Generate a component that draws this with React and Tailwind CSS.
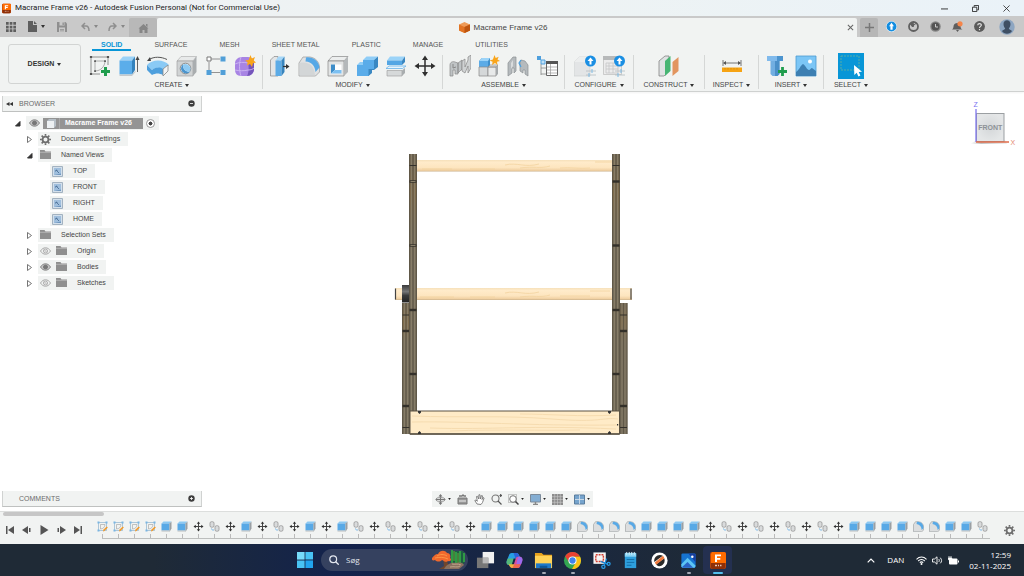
import React from "react";

const Svg = ({ s = "size-[22px]", v = "0 0 22 22", children, ...rest }) => (
  <svg className={`${s} shrink-0`} viewBox={v} fill="none" aria-hidden="true" {...rest}>
    {children}
  </svg>
);

const Caret = () => (
  <svg className="h-[3px] w-1 shrink-0" viewBox="0 0 4 3" aria-hidden="true">
    <path d="M0 0h4L2 3z" fill="#333" />
  </svg>
);

/* ---------- ribbon icons ---------- */

const SketchNew = () => (
  <Svg>
    <path d="M2 2h17v8M2 2v17h9" stroke="#777" strokeWidth=".8" />
    <path d="M6 16V6h10c0 5-4 10-10 10z" stroke="#999" strokeWidth=".8" />
    <path d="M.9.900h2.200v2.200H.9zM17.900.900h2.200v2.200h-2.200zM.9 17.900h2.200v2.200H.9zM5.200 5.200h1.700v1.700H5.200zM15.200 5.200h1.700v1.700h-1.700zM5.200 15.200h1.700v1.700H5.200z" fill="#555" />
    <path d="M16.500 12v9M12 16.500h9" stroke="#1f9d4d" strokeWidth="3" />
  </Svg>
);
const Extrude = () => (
  <Svg>
    <path d="M1.500 5.500 5 1.500h12l-3 4z" fill="#9ad2f7" />
    <path d="M1.500 5.500H14V19.500H1.500z" fill="#5badea" />
    <path d="m14 5.500 3-4V15l-3 4.500z" fill="#3583bd" />
    <path d="M1.500 19.500H14l3.500-4v1.500L14 21H1.500z" fill="#c5c9cc" />
    <path d="M19.500 17V4" stroke="#555" strokeWidth=".9" />
    <path d="m19.500 1 2 4h-4z" fill="#444" />
  </Svg>
);
const Revolve = () => (
  <Svg>
    <path d="M0 10C5 4 17 4 22 10l-5 5c-4-3-8-3-12 0z" fill="#8acaf5" />
    <path d="M0 10v5l5 5v-5zM5 15c4-3 8-3 11-1v6c-4-2-7-2-11 0z" fill="#4d9fdd" />
    <path d="m16 14 5-4v6l-5 5z" fill="#f2f3f3" stroke="#888" strokeWidth=".8" />
    <path d="M2 4.500c5-3 12-3 18 0" stroke="#555" />
    <path d="m0 6 3-4 1 4z" fill="#444" />
  </Svg>
);
const Hole = () => (
  <Svg>
    <path d="m1 6 4-4.500h15.500L17 6z" fill="#e8eaea" stroke="#aaa" strokeWidth=".6" />
    <path d="M1 6h16v15H1z" fill="#d0d3d4" stroke="#999" strokeWidth=".6" />
    <path d="m17 6 3.500-4.500V17L17 21z" fill="#a9adaf" />
    <circle cx="9.500" cy="13.500" r="5.300" fill="#f4f5f5" stroke="#777" strokeWidth=".8" />
    <path d="M7 9.500a5 5 0 1 0 7 7C10 17.500 6.500 14 7 9.500z" fill="#4a94cd" />
    <path d="M7 9.500c1-1 6-1 7.300 3 .2 1.500 0 3-.3 4C10 17.500 6.500 14 7 9.500z" fill="#8fcbf3" />
  </Svg>
);
const Pattern = () => (
  <Svg>
    <path d="M6 4h9M4 7v8M6 17.500h9" stroke="#888" strokeWidth=".9" />
    <path d="M2 2h4v4H2z" stroke="#777" fill="#fff" />
    <path d="M15.500 1.500h5v5h-5zM1.500 15h5v5h-5zM15.500 15h5v5h-5z" fill="#519fd8" />
  </Svg>
);
const FormIcon = () => (
  <Svg>
    <path d="M1 8c0-3 3-6 7-6h6c4 0 6 3 6 7v5c0 4-3 7-7 7H7c-4 0-6-3-6-6z" fill="#a884e4" />
    <path d="M14 7c2 0 5-3 6-4v11c0 4-3 7-7 7 2-3 2-10 1-14z" fill="#7555bb" />
    <path d="M1 9c4-2 9-2 13-1 3 0 5-2 6-3M1 15c4 1 9 1 13 0 3 0 5-1 6-2M7 2c-2 6-2 13 0 19" stroke="#cdb7f3" strokeWidth=".9" />
    <path d="m16.500 0 1.300 3.400L21 2.100l-1.300 3.300L22 7.500l-3 .7L18 12l-2-3-3 1.500.6-3.300L11 5.500l3.600-.6z" fill="#f9a51b" />
  </Svg>
);
const PressPull = () => (
  <Svg>
    <path d="M1.500 5 5 1.500h4V21H1.500z" fill="#e3e5e6" stroke="#888" strokeWidth=".7" />
    <path d="M6.500 5.500 9.500 1.500h6l-3 4z" fill="#a6d7f8" />
    <path d="M6.500 5.500h6V21h-6z" fill="#5cabe6" />
    <path d="m12.500 5.500 3-4V17l-3 4z" fill="#3784bd" />
    <path d="M14 11.500h4" stroke="#333" strokeWidth="1.200" />
    <path d="m17 9 3.500 2.500L17 14z" fill="#333" />
  </Svg>
);
const Fillet = () => (
  <Svg>
    <path d="M1 8 5 2h7c6 1 9 5 9.500 10v5l-4 4H1z" fill="#e0e2e3" stroke="#999" strokeWidth=".7" />
    <path d="M8 2.500c6-1 13 3 13.500 10L17.500 17C17 11 14 7 7.500 6.500z" fill="#56a8e6" />
    <path d="M1.500 8C9 6.500 16 9 17 20.500H1.500z" fill="#d3d6d7" />
  </Svg>
);
const Shell = () => (
  <Svg>
    <path d="m1 6 4-4.500h16L17 6z" fill="#eceeee" stroke="#888" strokeWidth=".7" />
    <path d="M1 6h16v15H1z" fill="#e2e4e4" stroke="#888" strokeWidth=".7" />
    <path d="m17 6 4-4.500V17l-4 4z" fill="#b4b8ba" />
    <path d="M4 9.500h10.500v9H4z" fill="#fff" />
    <path d="M4 9.500h4V15l-4 3.500z" fill="#3e8dc8" />
    <path d="M4 18.500 8 15h6.500v3.500z" fill="#7cc0f1" />
  </Svg>
);
const Combine = () => (
  <Svg>
    <path d="m7 5 3.500-3.500H22L18 5z" fill="#8fcdf7" />
    <path d="M7 5h11v9h-5v7H1V10h6z" fill="#5aace9" />
    <path d="m18 5 4-3.500V12l-4 3h-2v3l-3.500 3v-7H18z" fill="#3a88c2" />
    <path d="m1 10 3-3h3v3z" fill="#8fcdf7" />
  </Svg>
);
const Split = () => (
  <Svg>
    <path d="m2 5.500 3-4h15l-3 4z" fill="#9bd3f8" />
    <path d="M2 5.500h15V10H2z" fill="#54a6e4" />
    <path d="m17 5.500 3-4V7l-3 3z" fill="#3a86c0" />
    <path d="M1 13.500 4 11h17l-3.500 2.500z" fill="#e8f4fc" stroke="#69b3e8" strokeWidth=".8" />
    <path d="M2 15.500h15V21H2z" fill="#d6d9da" stroke="#999" strokeWidth=".6" />
    <path d="m17 15.500 3-2.500v5l-3 3z" fill="#a9adaf" />
  </Svg>
);
const Move = ({ s }) => (
  <Svg s={s}>
    <path d="M11 3v16M3 11h16" stroke="#2e2e2e" strokeWidth="1.500" />
    <path d="m11 .5 3 4.500H8zM11 21.500 14 17H8zM.5 11 5 8v6zM21.500 11 17 8v6z" fill="#2e2e2e" />
  </Svg>
);
const Joint = () => (
  <Svg>
    <path d="M1 21V10c0-3 3-4 5-3l3 1v11H6v-4H4v6zM9 8l4-3v9l-4 4z" fill="#bfc3c5" stroke="#888" strokeWidth=".7" />
    <path d="M13 16V6l3-2v8l3-7V2l3-2v13l-3 5V11l-3 7z" fill="#cfd2d3" stroke="#888" strokeWidth=".7" />
    <path d="M4 9v4l3-1" stroke="#888" />
  </Svg>
);
const NewComponent = () => (
  <Svg>
    <path d="m1 6 3-3h8v9H1z" fill="#3f8fcb" />
    <path d="M1 6h9v6H1z" fill="#5cabe6" />
    <path d="m1 6 3-3h8l-2 3z" fill="#9bd3f8" />
    <path d="M1 12h9v9H1z" fill="#d5d8d9" stroke="#888" strokeWidth=".7" />
    <path d="m10 12 2-2h8l-2 2zM10 12h8v9h-8z" fill="#e8eaea" stroke="#888" strokeWidth=".7" />
    <path d="m18 12 2-2v9l-2 2z" fill="#a5a9ab" />
    <path d="m16.500 0 1.200 3 3-1.300L19.500 4.500 22 6l-3 .8.5 3.200-2.500-2-3 2 .6-3.200L11.500 5.500l3.400-.9z" fill="#f9a51b" />
  </Svg>
);
const AsBuilt = () => (
  <Svg>
    <path d="M1 21V8l5-6h3v14l-2 2v-5H5v5zM13 16V8l1-3 4 1 3 4v11l-3-2v-4h-2v3z" fill="#b5babd" stroke="#8b8f92" strokeWidth=".7" />
    <path d="m4 8 2-3v6l-2 3z" fill="#d9dcdd" />
    <path d="m14 5-2 3 2 4" stroke="#49a0e0" strokeWidth="1.200" />
  </Svg>
);
const Bom = () => (
  <Svg>
    <path d="M1 1h4v4H1z" fill="#4e9fdd" />
    <path d="M5 5h4v4H5z" fill="#bfe0f6" stroke="#4e9fdd" />
    <path d="M5 9v11M5 13h5M5 19h5" stroke="#888" strokeWidth=".8" />
    <path d="M10.500 6.500h11v14h-11z" fill="#fff" stroke="#666" />
    <path d="M10 6h12v3H10z" fill="#555" />
    <path d="M11 12h10M11 15h10M11 18h10M14.500 9v11" stroke="#999" strokeWidth=".7" />
  </Svg>
);
const Upgrade = () => (
  <>
    <circle cx="16.500" cy="6" r="5.500" fill="#1b8fe3" />
    <path d="M16.500 2.500 19.500 6h-2v3.500h-2V6h-2z" fill="#fff" />
    <path d="M12 16h10M12 20h10" stroke="#b5bcc2" strokeWidth=".8" />
    <path d="M18 14v4M15 18v4" stroke="#7dbbe5" />
  </>
);
const Configure = () => (
  <Svg>
    <path d="m0 7 5-5h14l-3 5v14H0z" fill="#e3e5e6" stroke="#cbcece" strokeWidth=".6" />
    <path d="m0 7 5-5h14l-3 5z" fill="#eceeee" />
    <Upgrade />
  </Svg>
);
const ConfigTable = () => (
  <Svg>
    <path d="M.5 1.500h18v18H.5z" fill="#ececec" stroke="#bbb" strokeWidth=".7" />
    <path d="M0 1h19v4H0z" fill="#b7b9ba" />
    <path d="M3 8h12v10H3zM3 11h12M3 14h12M6 8v10M10 8v10" stroke="#c5c7c8" strokeWidth=".8" />
    <Upgrade />
  </Svg>
);
const Plane = () => (
  <Svg>
    <path d="m1 6 6-5h4v15l-5 5H1z" fill="#dfe2e3" stroke="#777" strokeWidth=".7" />
    <path d="m7 6 5.500-5v15L7 21z" fill="#47b573" />
    <path d="m14.500 7 6-5v14l-6 5z" fill="#e2955f" />
  </Svg>
);
const Measure = () => (
  <Svg>
    <path d="M2 5v6M20 5v6M3 8h16" stroke="#666" strokeWidth=".9" />
    <path d="m2 8 3-2v4zM20 8l-3-2v4z" fill="#555" />
    <path d="M1 12.500h20v4.500H1z" fill="#f6a313" />
    <path d="M4 13v1.500M7 13v1.500M10 13v1.500M13 13v1.500M16 13v1.500" stroke="#c98208" strokeWidth=".6" />
  </Svg>
);
const InsertBolt = () => (
  <Svg>
    <path d="M1 1h16v5H1z" fill="#4c94cf" />
    <path d="M1 1h10v5H1z" fill="#80baec" />
    <path d="M4.500 6h9v13l-2 2h-5l-2-2z" fill="#71aee1" />
    <path d="M9 6h4.500v13l-2 2H9z" fill="#4a8fc8" />
    <path d="M16.500 12v9M12 16.500h9" stroke="#1f9d4d" strokeWidth="2.800" />
  </Svg>
);
const InsertImage = () => (
  <Svg>
    <path d="M1 1h20v20H1z" fill="#7cc6f6" stroke="#4d9bd0" strokeWidth=".8" />
    <path d="M1 17c4-3 4-6 7-8 3 2 4 6 6 6 1 0 2-2 3-2l4 3v5H1z" fill="#3d7fb2" />
    <circle cx="15" cy="6.500" r="2" fill="#fff" />
  </Svg>
);
const SelectIcon = () => (
  <span className="-my-0.5 flex size-[26px] items-center justify-center bg-[#0896d7]">
    <Svg>
      <path d="M1 1h18v14H1z" stroke="#6db39a" strokeWidth=".8" strokeDasharray="2 1" />
      <path d="m14 10 .3 10 2.400-2.200 1.700 3.700 2-1-1.700-3.500 3.300-.3z" fill="#fff" />
    </Svg>
  </span>
);

const ribbonGroups = [
  { name: "CREATE", w: "w-[181px]", icons: [SketchNew, Extrude, Revolve, Hole, Pattern, FormIcon] },
  { name: "MODIFY", w: "w-[180px]", icons: [PressPull, Fillet, Shell, Combine, Split, Move] },
  { name: "ASSEMBLE", w: "w-[122px]", icons: [Joint, NewComponent, AsBuilt, Bom] },
  { name: "CONFIGURE", w: "w-[69px]", icons: [Configure, ConfigTable] },
  { name: "CONSTRUCT", w: "w-[71px]", icons: [Plane] },
  { name: "INSPECT", w: "w-[54px]", icons: [Measure] },
  { name: "INSERT", w: "w-[65px]", icons: [InsertBolt, InsertImage] },
  { name: "SELECT", w: "w-[54px]", icons: [SelectIcon] },
];
const ribbonTabs = ["SOLID", "SURFACE", "MESH", "SHEET METAL", "PLASTIC", "MANAGE", "UTILITIES"];

const FusionLogo = ({ s }) => (
  <Svg s={s} v="0 0 16 17">
    <rect x="0" y="0" width="16" height="17" rx="2" fill="#b8440a" />
    <path d="M2 0h12a2 2 0 0 1 2 2v9H1V2z" fill="#ff6b00" />
    <path d="M5 2.500h6v1.800H7V6h3.300v1.700H7V10H5z" fill="#fff" />
    <path d="M1 11h14v4a2 2 0 0 1-2 2H3a2 2 0 0 1-2-2z" fill="#8f2f07" />
    <path d="M5 13.500h2M8 13.500h1M10 13.500h1.500" stroke="#e6c8ba" strokeWidth="1.300" />
  </Svg>
);

function TitleBar() {
  return (
    <header className="flex h-4 items-center bg-gradient-to-r from-[#eef1f4] via-[#eef3f3] to-[#eaf2f8] pr-3.5 pl-0.5">
      <FusionLogo s="h-[11px] w-[9px]" />
      <h1 className="ml-1 font-[Roboto,sans-serif] text-[8px] leading-4 whitespace-nowrap text-[#222]">
        Macrame Frame v26 - Autodesk Fusion Personal (Not for Commercial Use)
      </h1>
      <div className="ml-auto flex gap-6">
        <button aria-label="Minimize"><Svg s="size-[7px]" v="0 0 8 8"><path d="M0 4.500h8" stroke="#222" /></Svg></button>
        <button aria-label="Restore"><Svg s="size-[7px]" v="0 0 8 8"><path d="M.5 2.500h5v5h-5zM2.500 2V.5h5v5H6" stroke="#222" /></Svg></button>
        <button aria-label="Close"><Svg s="size-[7px]" v="0 0 8 8"><path d="m.5.5 7 7m0-7-7 7" stroke="#222" strokeWidth=".9" /></Svg></button>
      </div>
    </header>
  );
}

function TabBar() {
  return (
    <div className="flex h-[21px] items-end bg-[#c9c9c9]">
      <div className="flex h-[21px] w-[129px] shrink-0 items-center pl-1.5">
        <button aria-label="Data panel">
          <Svg s="size-2.5" v="0 0 10 10"><path d="M0 0h2.700v2.700H0zM3.700 0h2.700v2.700H3.700zM7.300 0H10v2.700H7.300zM0 3.700h2.700v2.700H0zM3.700 3.700h2.700v2.700H3.700zM7.300 3.700H10v2.700H7.300zM0 7.300h2.700V10H0zM3.700 7.300h2.700V10H3.700zM7.300 7.300H10V10H7.300z" fill="#5e5e5e" /></Svg>
        </button>
        <button aria-label="File" className="ml-3 flex items-center gap-1">
          <Svg s="h-[11px] w-[9px]" v="0 0 9 11"><path d="M0 0h5v4h4v7H0zM6 0l3 3H6z" fill="#5e5e5e" /></Svg>
          <Caret />
        </button>
        <button aria-label="Save" className="ml-3">
          <Svg s="size-2.5" v="0 0 10 10"><path d="M0 0h8.500L10 1.500V10H0z" fill="#8f8f8f" /><path d="M2.500 0h5v3.500h-5zM2 5.500h6V10H2z" fill="#c9c9c9" /><path d="M5.500.5h1.300V3H5.500zM3 7h4v.8H3zM3 8.500h4v.8H3z" fill="#8f8f8f" /></Svg>
        </button>
        <button aria-label="Undo" className="ml-3.5 flex items-center gap-1">
          <Svg s="size-[9px]" v="0 0 9 9"><path d="M4 1 1 4l3 3M1.500 4H5c2 0 3 1.500 3 5" stroke="#8f8f8f" strokeWidth="1.500" /></Svg>
          <svg className="h-[3px] w-1" viewBox="0 0 4 3" aria-hidden="true"><path d="M0 0h4L2 3z" fill="#888" /></svg>
        </button>
        <button aria-label="Redo" className="ml-2.5 flex items-center gap-1">
          <Svg s="size-[9px]" v="0 0 9 9"><path d="m5 1 3 3-3 3M7.500 4H4C2 4 1 5.500 1 9" stroke="#8f8f8f" strokeWidth="1.500" /></Svg>
          <svg className="h-[3px] w-1" viewBox="0 0 4 3" aria-hidden="true"><path d="M0 0h4L2 3z" fill="#888" /></svg>
        </button>
      </div>
      <button aria-label="Home" className="flex h-[19px] w-7 shrink-0 items-center justify-center rounded-t-xs bg-[#b8b8b8] pt-0.5">
        <Svg s="size-[11px]" v="0 0 11 11"><path d="m5.500 1 5 4.500h-1V10h-3V7h-2v3h-3V5.500h-1zM8 1h1.500v3L8 2.700z" fill="#868686" /></Svg>
      </button>
      <div className="flex h-[19px] min-w-0 flex-1 items-center rounded-t-xs bg-[#f1f3f2] pr-[3px] pl-0.5">
        <div className="flex flex-1 items-center justify-center gap-1 text-[8px] text-[#444]">
          <Svg s="size-[11px]" v="0 0 11 11"><path d="M5.500 0 11 2.500v6L5.500 11 0 8.500v-6z" fill="#ee9b58" /><path d="m0 2.500 5.500 2.500L11 2.500v6L5.500 11 0 8.500z" fill="#e27424" /><path d="M5.500 5 11 2.500v6L5.500 11z" fill="#bd5510" /></Svg>
          <span className="pt-px">Macrame Frame v26</span>
        </div>
        <button aria-label="Close document"><Svg s="size-[7px]" v="0 0 8 8"><path d="m1 1 6 6m0-6L1 7" stroke="#666" strokeWidth="1.200" /></Svg></button>
      </div>
      <button aria-label="New document" className="ml-[3px] flex h-[19px] w-[18px] shrink-0 items-center justify-center rounded-t-xs bg-[#b6b6b6]">
        <Svg s="size-[9px]" v="0 0 9 9"><path d="M4.500 0v9M0 4.500h9" stroke="#777" strokeWidth="1.500" /></Svg>
      </button>
      <div className="flex h-[21px] shrink-0 items-center gap-[11px] pr-[9px] pl-2">
        <button aria-label="Updates"><Svg s="size-[11px]" v="0 0 10 10"><circle cx="5" cy="5" r="4.900" fill="#fff" /><circle cx="5" cy="5" r="4.500" fill="#138de0" /><path d="m5 1.500 2.200 3.200H6V8H4V4.700H2.800z" fill="#fff" /></Svg></button>
        <button aria-label="Extensions"><Svg s="size-[11px]" v="0 0 11 11"><circle cx="5.500" cy="5.500" r="4.500" stroke="#606060" strokeWidth="1.800" /><path d="M2 2.500h3.500v3H4zM6 4l2.500-2" fill="#606060" stroke="#606060" /></Svg></button>
        <button aria-label="Job status"><Svg s="size-[11px]" v="0 0 11 11"><circle cx="5.500" cy="5.500" r="5.300" fill="#8a8a8a" /><circle cx="5.500" cy="5.500" r="4" fill="#545454" /><path d="M5.500 3v3h2.500" stroke="#ccc" /></Svg></button>
        <button aria-label="Notifications"><Svg s="size-[11px]" v="0 0 11 11"><path d="M0 8.500c2-1 1-4 2.500-5.500C5 1 9 2 8.500 5c0 1.500.5 3 2 3.500zM4 9h3l-1.500 2z" fill="#5e5e5e" /><circle cx="8" cy="2.800" r="2.600" fill="#f5854a" /></Svg></button>
        <button aria-label="Help"><Svg s="size-[11px]" v="0 0 11 11"><circle cx="5.500" cy="5.500" r="5.400" fill="#5a5a5a" /><path d="M3.700 4.300C3.800 2 7.400 2 7.300 4.200 7.200 5.500 5.500 5.300 5.500 7M5.500 8v1.200" stroke="#e2e2e2" strokeWidth="1.200" /></Svg></button>
        <button aria-label="Account" className="ml-[3px]"><Svg s="size-4" v="0 0 16 16"><circle cx="8" cy="8" r="7.700" fill="#8da6c2" /><path d="M4.500 5c0-5 7-5 7 0 0 2-1 3.500-1.700 4.500.5 1.300 2 1.200 3.200 2.500-2 3.500-8 3.500-10 0 1.200-1.300 2.700-1.200 3.200-2.500C5.500 8.500 4.500 7 4.500 5z" fill="#3f4f64" /></Svg></button>
      </div>
    </div>
  );
}

function Ribbon() {
  return (
    <div className="flex h-[55px] items-start border-b border-[#cfd1d0] bg-[#f1f3f2] shadow-xs">
      <button aria-haspopup="menu" className="mt-[7px] ml-2 flex h-10 w-[73px] shrink-0 items-center justify-center gap-[3px] rounded-[3px] border border-[#d2d4d3] text-[7px] font-bold text-[#333]">
        DESIGN <Caret />
      </button>
      <div className="min-w-0 pl-px">
        <nav className="flex h-3.5 gap-3.5 pl-2.5" aria-label="Workspace tabs">
          {ribbonTabs.map((t, i) => (
            <button
              key={t}
              className={
                i === 0
                  ? "border-b-2 border-[#0896d7] px-[9px] pt-1 text-[7px] leading-2 font-bold whitespace-nowrap text-[#0896d7]"
                  : "border-b-2 border-transparent px-[9px] pt-1 text-[7px] leading-2 whitespace-nowrap text-[#555]"
              }
            >
              {t}
            </button>
          ))}
        </nav>
        <div className="flex pt-1">
          {ribbonGroups.map((g, i) => (
            <section key={g.name} className={`${g.w} ${i < ribbonGroups.length - 1 ? "border-r border-[#d5d7d6]" : ""} flex h-[34px] shrink-0 flex-col items-center`}>
              <div className="flex h-[22px] items-center justify-center gap-[7px]">
                {g.icons.map((Icon, k) => (
                  <button key={k} aria-label={`${g.name} ${k + 1}`}><Icon /></button>
                ))}
              </div>
              <button className="mt-1 flex items-center gap-[3px] text-[7px] leading-2 text-[#444]">
                {g.name} <Caret />
              </button>
            </section>
          ))}
        </div>
      </div>
    </div>
  );
}

/* ---------- browser tree ---------- */

const Folder = () => (
  <Svg s="h-2.5 w-[11px]" v="0 0 11 10"><path d="M0 0h4.500l1 1.500H11V9H0z" fill="#8f8f8f" /><path d="M0 2.300h11" stroke="#c4c4c4" strokeWidth=".7" /></Svg>
);
const Eye = ({ off }) => (
  <Svg s="h-2 w-[11px]" v="0 0 11 8">
    <path d="M.5 4C3-.3 8-.3 10.500 4 8 8.300 3 8.300.5 4z" stroke={off ? "#aaa" : "#888"} strokeWidth="1" fill={off ? "none" : "#c5c5c5"} />
    <circle cx="5.500" cy="4" r="2" fill={off ? "#eee" : "#777"} stroke={off ? "#aaa" : "#777"} />
    {off && <path d="m3 1 5 6" stroke="#bbb" />}
  </Svg>
);
const GearIcon = ({ s = "size-[11px]" }) => (
  <Svg s={s} v="0 0 12 12">
    <circle cx="6" cy="6" r="3.200" stroke="#6e6e6e" strokeWidth="2" />
    <path d="M6 0v2M6 10v2M0 6h2M10 6h2M1.800 1.800l1.400 1.400M8.800 8.800l1.400 1.400M10.200 1.800 8.800 3.200M3.200 8.800l-1.400 1.400" stroke="#6e6e6e" strokeWidth="1.800" />
  </Svg>
);
const ViewIcon = () => (
  <Svg s="size-[11px]" v="0 0 11 11"><path d="M.5.5h10v10H.5z" fill="#d3e0ec" stroke="#a3b2c0" /><path d="M2 2h7v7H2z" fill="#a0bfdd" /><path d="m4 4 3 3M3.500 5.500 4 4l1.500.500" stroke="#4d7298" strokeWidth=".9" /><path d="M2 9h7V7.500z" fill="#6f97bf" /></Svg>
);
const Twist = ({ open }) => (
  <Svg s="size-[7px]" v="0 0 7 7">
    {open ? <path d="M6 1.500V6H1.500z" fill="#333" stroke="#333" /> : <path d="M1.500.5 5.500 3.500l-4 3z" stroke="#666" fill="#fff" strokeWidth=".9" />}
  </Svg>
);

const nodes = [
  { label: "Document Settings", icons: [GearIcon], arrow: true },
  { label: "Named Views", icons: [Folder], arrow: true, open: true },
  { label: "TOP", view: true },
  { label: "FRONT", view: true },
  { label: "RIGHT", view: true },
  { label: "HOME", view: true },
  { label: "Selection Sets", icons: [Folder], arrow: true },
  { label: "Origin", eye: "off", icons: [Folder], arrow: true },
  { label: "Bodies", eye: "on", icons: [Folder], arrow: true },
  { label: "Sketches", eye: "off", icons: [Folder], arrow: true },
];

function PanelBar({ title, open }) {
  return (
    <div className="flex h-4 w-[200px] items-center border border-t-0 border-[#d0d2d1] border-b-[#bfc1c0] bg-[#f1f3f2] px-[3px] text-[7px] text-[#6b6b6b]">
      <span className="flex w-[13px]">
        {open && <Svg s="h-1 w-[7px]" v="0 0 7 4"><path d="M3.500 0v4L0 2zM7 0v4L3.500 2z" fill="#333" /></Svg>}
      </span>
      <h2 className="pt-0.5">{title}</h2>
      <button aria-label={`Toggle ${title.toLowerCase()}`} className="mr-[3px] ml-auto">
        <Svg s="size-[7px]" v="0 0 7 7"><circle cx="3.500" cy="3.500" r="3.200" fill="#3d3d3d" /><path d={open ? "M2 3.500h3" : "M2 3.500h3M3.500 2v3"} stroke="#fff" strokeWidth=".8" /></Svg>
      </button>
    </div>
  );
}

function Browser() {
  return (
    <aside className="pt-1 pl-0.5 text-[7px] text-[#444]">
      <PanelBar title="BROWSER" open />
      <ul className="mt-[3px]">
        <li className="flex h-4 items-center pl-3">
          <Twist open />
          <div className="ml-[5px] flex h-3.5 items-center bg-[#f1f3f2] pr-1 pl-[3px]">
            <Eye />
            <span className="ml-[3px] flex h-[11px] w-[100px] items-center bg-[#949494] font-bold text-white">
              <span className="flex h-[11px] w-[17px] items-center justify-center border-r border-[#aaa]">
                <Svg s="size-[9px]" v="0 0 9 9"><path d="M0 2 2 0h7v7L7 9H0z" fill="#b7c0c7" /><path d="M0 2h7v7H0z" fill="#edf1f3" /></Svg>
              </span>
              <span className="ml-[5px] whitespace-nowrap">Macrame Frame v26</span>
            </span>
            <input type="radio" name="active" defaultChecked aria-label="Activate Macrame Frame v26" className="ml-[3px] size-[9px] appearance-none rounded-full border border-[#999] bg-white bg-radial from-[#444] from-35% to-white to-45%" />
          </div>
        </li>
        {nodes.map((n) => (
          <li key={n.label} className={`flex h-4 items-center ${n.view ? "pl-12" : "pl-6"}`}>
            {n.arrow && <span className="mr-[5px] flex"><Twist open={n.open} /></span>}
            <div className="flex h-3.5 items-center bg-[#f1f3f2] pr-2 pl-0.5">
              {n.eye && <span className="mr-[5px] flex"><Eye off={n.eye === "off"} /></span>}
              {n.view ? <ViewIcon /> : n.icons.map((I, k) => <I key={k} />)}
              <span className="ml-2.5 whitespace-nowrap">{n.label}</span>
            </div>
          </li>
        ))}
      </ul>
    </aside>
  );
}

/* ---------- 3D model ---------- */

const Post = ({ x, y, h, thick, thin }) => (
  <g>
    <rect x={x} y={y} width="8" height={h} fill="url(#post)" />
    <path d={`M${x + 2.500} ${y}v${h}M${x + 5.500} ${y}v${h}`} stroke="#8c826c" strokeWidth=".8" />
    <path d={`M${x + 0.500} ${y}v${h}M${x + 4} ${y}v${h}M${x + 7.500} ${y}v${h}`} stroke="#5b5344" strokeWidth=".8" />
    {thick.map((t) => <rect key={t} x={x + 0.500} y={t - 1.200} width="7" height="2.400" fill="#33302a" />)}
    {thin.map((t) => <rect key={t} x={x + 0.500} y={t - 0.500} width="7" height="1" fill="#33302a" />)}
  </g>
);

function Model() {
  return (
    <svg className="mx-auto mt-[58px] h-[290px] w-[240px]" viewBox="392 150 240 290" role="img" aria-label="Front view of the macrame frame">
      <defs>
        <linearGradient id="post" x1="0" x2="0" y1="0" y2="1">
          <stop offset="0" stopColor="#706653" /><stop offset=".15" stopColor="#806c4c" /><stop offset=".3" stopColor="#756c5a" /><stop offset="1" stopColor="#736b59" />
        </linearGradient>
        <linearGradient id="rod" x1="0" x2="0" y1="0" y2="1">
          <stop offset="0" stopColor="#f6e0ba" /><stop offset=".2" stopColor="#ffebca" /><stop offset=".65" stopColor="#fde5bf" /><stop offset=".9" stopColor="#f0d0a2" /><stop offset="1" stopColor="#c9b08a" />
        </linearGradient>
        <linearGradient id="knob" x1="0" x2="0" y1="0" y2="1">
          <stop offset="0" stopColor="#3b3b3b" /><stop offset=".38" stopColor="#777" /><stop offset=".6" stopColor="#3b3b3b" /><stop offset="1" stopColor="#222" />
        </linearGradient>
      </defs>
      <rect x="417" y="160" width="196" height="11.500" fill="url(#rod)" />
      <path d="M505 165c12-3 20 3 34-1M520 168c14-2 20 1 30-2M595 162h17M560 168c10-1 20 1 30 0M422 169h30M470 169h25" stroke="#f3d3a0" strokeWidth=".8" fill="none" />
      <rect x="395" y="288" width="237" height="12" fill="url(#rod)" />
      <path d="M505 293c12-3 20 3 34-1M520 297c14-2 20 1 30-2M590 291h20M560 296h30M420 297h34M470 297h25" stroke="#f3d3a0" strokeWidth=".8" fill="none" />
      <path d="M395.500 288.500v11M631 288.500v11" stroke="#444" strokeWidth="1.200" />
      <Post x={402} y={303} h={131} thick={[331, 406]} thin={[315, 427.500]} />
      <Post x={619.500} y={303} h={131} thick={[331, 406]} thin={[315, 427.500]} />
      <rect x="402" y="285" width="8" height="17.500" fill="url(#knob)" />
      <Post x={409} y={154} h={258} thick={[181.500, 245.500, 310, 374]} thin={[165.500]} />
      <Post x={612} y={154} h={258} thick={[181.500, 245.500, 310, 374]} thin={[165.500]} />
      <path d="M410.500 181.500h5M410.500 245.500h5" stroke="#8a806a" strokeWidth="1" />
      <rect x="410" y="411" width="209.500" height="23" fill="#ffebc7" stroke="#5b5344" />
      <path d="M412 416c50 2 90-1 140 3s50-2 66 0M412 422c60-1 110 4 205 3M430 428c60 2 100-3 186 1M450 431c50-2 90 0 130-1M520 414c30 0 60 3 96 1" stroke="#f6dcb0" fill="none" />
      <path d="M410 434h209.500" stroke="#5b5344" strokeWidth="1.300" />
      <path d="M418 411h3v1.500l-1.500 1.500-1.500-1.500zM608 411h3v1.500l-1.500 1.500-1.500-1.500zM418 434h3v-1.500l-1.500-1.500-1.500 1.500zM608 434h3v-1.500l-1.500-1.500-1.500 1.500zM617 424h1.200v1.500H617z" fill="#333" />
    </svg>
  );
}

const ViewCube = () => (
  <svg className="mt-2 mr-1 ml-auto h-[52px] w-[52px]" viewBox="968 100 52 52" role="img" aria-label="View cube, front">
    <defs>
      <radialGradient id="cube"><stop offset="0" stopColor="#d4d7d9" /><stop offset="1" stopColor="#e4e6e7" /></radialGradient>
      <linearGradient id="shade"><stop offset="0" stopColor="#bbb" stopOpacity="0" /><stop offset=".3" stopColor="#999" /><stop offset="1" stopColor="#bbb" stopOpacity=".4" /></linearGradient>
    </defs>
    <path d="m970 144 7-4h28l2 4z" fill="url(#shade)" opacity=".6" />
    <rect x="976.500" y="113.500" width="27.500" height="28" fill="url(#cube)" stroke="#9b9fa2" />
    <path d="M976 109v33" stroke="#8078ef" strokeWidth="1.300" />
    <path d="M976 142h33" stroke="#df6b4a" strokeWidth="1.500" />
    <text x="973.500" y="107" fontSize="7" fill="#7a72f0" fontFamily="Liberation Sans">Z</text>
    <text x="1010.500" y="144.500" fontSize="7" fill="#e58a6e" fontFamily="Liberation Sans">X</text>
    <text x="990.300" y="130" fontSize="7" fontWeight="bold" textAnchor="middle" fill="#8d9297" fontFamily="Liberation Sans Narrow, Liberation Sans">FRONT</text>
  </svg>
);

/* ---------- navigation bar ---------- */

const navTools = [
  { n: "Orbit", c: true, d: <><path d="M5.500 1v9M1 5.500h9" stroke="#777" strokeWidth="1.200" /><ellipse cx="5.500" cy="5.500" rx="4.800" ry="2" stroke="#999" /><path d="m5.500 0 2 2.500h-4zM5.500 11l2-2.500h-4z" fill="#777" /></> },
  { n: "Look at", d: <><path d="M1 4h9v6H1z" fill="#999" stroke="#777" /><path d="M2 2h3l1-1 1 1h2" stroke="#777" strokeWidth="1.300" /><path d="M2 7h7" stroke="#eee" /></> },
  { n: "Pan", d: <path d="M3 10 .8 6.500 2 6l1.300 1.300L2.500 2.500l1-.2L4.700 5l.2-4.200H6L6.300 5 7.500 1.500l1 .3L8 5.500l1.200-2 .9.500L8.500 8.500 7 10.500z" fill="#fff" stroke="#777" strokeWidth=".9" /> },
  { n: "Zoom", d: <><circle cx="4.500" cy="4.500" r="3.500" stroke="#777" strokeWidth="1.100" /><path d="m7 7 3.500 3.500M8.500 1.500h2.500M9.700 0v3" stroke="#555" strokeWidth="1.200" /></> },
  { n: "Fit", c: true, d: <><path d="M.5.5h8v8h-8z" stroke="#999" strokeDasharray="1 1" /><circle cx="5" cy="5" r="3.300" stroke="#777" fill="#fff" /><path d="m7.500 7.500 3 3" stroke="#444" strokeWidth="1.500" /></> },
  { n: "Display settings", c: true, d: <><path d="M.5.500h10v7.500H.5z" fill="#84aed3" stroke="#7c8b9a" /><path d="M3 10.500h5M5.500 8v2" stroke="#888" strokeWidth="1.500" /></> },
  { n: "Grid and snaps", c: true, d: <><path d="M0 0h11v11H0z" fill="#8d8d8d" /><path d="M2.700 0v11M5.500 0v11M8.300 0v11M0 2.700h11M0 5.500h11M0 8.300h11" stroke="#c9c9c9" strokeWidth=".6" /></> },
  { n: "Viewports", c: true, d: <><path d="M.5 1h10v9H.5z" fill="#76a4cd" stroke="#5a7d9d" /><path d="M5.500 1v9M1 5.500h9" stroke="#dce6ee" strokeWidth=".8" /></> },
];

const NavBar = () => (
  <nav aria-label="Navigation" className="flex h-4 items-center gap-1.5 bg-[#f1f3f2] px-[3px]">
    {navTools.map((t) => (
      <button key={t.n} aria-label={t.n} className="flex items-center gap-0.5">
        <Svg s="size-[11px]" v="0 0 11 11">{t.d}</Svg>
        {t.c && <svg className="h-0.5 w-[3px]" viewBox="0 0 4 3" aria-hidden="true"><path d="M0 0h4L2 3z" fill="#222" /></svg>}
      </button>
    ))}
  </nav>
);

/* ---------- timeline ---------- */

const glyphs = {
  s: <><path d="M1.500 1.500h8v8h-8z" stroke="#9bbad2" strokeWidth=".8" /><path d="M3.500 8V3.500H8C8 6 6 8 3.500 8z" stroke="#aaa" strokeWidth=".7" /><path d="M.5.5h2v2h-2zM8.500.5h2v2h-2zM.5 8.500h2v2h-2z" fill="#7ab5e2" /><path d="m6 10.500.5-2 3.300-3 1 1-3.300 3.500z" fill="#f29a2b" /></>,
  b: <><path d="m.5 2.500 2-2h8l-2 2z" fill="#8bc9f3" /><path d="M.5 2.500h8v7h-8z" fill="#58a9e6" /><path d="m8.500 2.500 2-2v7l-2 3.500z" fill="#9a9fa3" /><path d="M.5 9.500h8v1h-8z" fill="#b9bdbf" /></>,
  m: <><path d="M5.500 1v9M1 5.500h9" stroke="#444" strokeWidth="1" /><path d="m5.500.5 1.700 2.300H3.800zM5.500 10.500l1.700-2.300H3.800zM.5 5.500l2.300-1.700v3.400zM10.500 5.500 8.200 3.800v3.400z" fill="#333" /></>,
  l: <><rect x="1" y=".7" width="4" height="5.500" rx="1.500" fill="#d9dbdc" stroke="#959595" strokeWidth=".8" /><rect x="6" y="4.700" width="4" height="5.500" rx="1.500" fill="#d9dbdc" stroke="#959595" strokeWidth=".8" /><path d="M2.500 7.500c0 1.500 1 1.500 2.500 1.500" stroke="#6fb1e4" strokeWidth=".9" /></>,
  f: <><path d="M.5 3.500 2.500.7H5c3.500 0 5.500 2.500 5.700 5.300v3l-2 1.700H.5z" fill="#dcdedf" stroke="#a2a6a8" strokeWidth=".7" /><path d="M4 .8c4 0 6.500 2 6.500 6.500L8.700 9C8.500 5.500 7 3.500 3.500 3z" fill="#58a9e6" /></>,
};
const history = "ssssbbmlmbmlmbmblmlmlmlmbbbbbbffffbbbbmlmlmlmlmbbbbffbbl".split("");
const play = [
  ["Go to start", <path key="p" d="M1 1h1.500v8H1zM9 1v8L3 5z" fill="#555" />],
  ["Step back", <path key="p" d="M6 1v8L0 5zM7 3h1.500v4H7z" fill="#555" />],
  ["Play", <path key="p" d="M1.500 0v10L9.500 5z" fill="#555" />],
  ["Step forward", <path key="p" d="M4 1v8l6-4zM1.500 3H3v4H1.500z" fill="#555" />],
  ["Go to end", <path key="p" d="M7.500 1H9v8H7.500zM1 1v8l6-4z" fill="#555" />],
];

const Timeline = () => (
  <footer className="h-[33px] border-t border-[#dcdedd] bg-[#f1f3f2]">
    <div className="ml-[3px] h-1 w-[101px] rounded-sm bg-[#c6c6c6]" />
    <div className="flex h-7 items-center pr-[9px] pl-[5px]">
      <div className="flex gap-[7px]">
        {play.map(([n, d]) => <button key={n} aria-label={n}><Svg s="size-2.5" v="0 0 10 10">{d}</Svg></button>)}
      </div>
      <ol className="ml-[11px] flex">
        {history.map((h, i) => (
          <li key={i} className="flex w-4 flex-col items-center">
            <Svg s="size-[11px]" v="0 0 11 11">{glyphs[h]}</Svg>
            <span className="mt-0.5 h-1 w-px bg-[#bbb]" />
            <span className={i === 0 ? "h-px w-2 self-end bg-[#bcbebd]" : "h-px w-4 bg-[#bcbebd]"} />
          </li>
        ))}
      </ol>
      <button aria-label="Timeline settings" className="ml-auto"><GearIcon /></button>
    </div>
  </footer>
);

/* ---------- taskbar ---------- */

const apps = [
  ["Task view", <><path d="M7 1h12v12H7z" fill="#f2f2f2" /><path d="M1 7h12v11H1z" fill="#777" /><path d="M7 7h6v6H7z" fill="#b9b9b9" /></>],
  ["Copilot", <><path d="M7 2h5c2 0 2.500 1.500 3 3l1 3H9L6 15C2 15 1 13 2 10l2-5c.5-2 1.500-3 3-3z" fill="#269ee3" /><path d="M2 10c-1 3 0 5 3 5h2l2-7H3z" fill="#56b77a" /><path d="M12 2c2 0 2.500 1.500 3 3l1 3h-5l-2-6z" fill="#2c62d8" /><path d="M14 6c4-.5 5 2 4 5l-2 5c-.5 1.500-1.500 2-3 2H8c-2 0-2.500-1.500-3-3h4l2-6c.5-2 1-3 3-3z" fill="#d7509e" /><path d="M14 6c4-.5 5 2 4 5l-1 3h-5l1-5z" fill="#9b6bed" /><path d="M4 14h6l-2 4c-2 0-3.500-1.500-4-4z" fill="#f2b13d" /><path d="M8 18l2-4h6l-1 2.500c-.5 1-1.500 1.500-3 1.500z" fill="#f0674d" /></>],
  ["File Explorer", <><path d="M1 2h7l2 2h9v5H1z" fill="#e6a11c" /><path d="M1 5h18v13H1z" fill="#ffd257" /><path d="M2 13h16v5H2z" fill="#2079c9" /><path d="M6 15.500h8V18H6z" fill="#0d5799" /></>, "on"],
  ["Chrome", <><circle cx="10" cy="10" r="9" fill="#33a652" /><path d="M2.200 5.500A9 9 0 0 1 18 6h-8a4 4 0 0 0-3.500 6z" fill="#e84132" /><path d="M18 6a9 9 0 0 1-8.500 13l4-7A4 4 0 0 0 10 6z" fill="#fbc116" /><circle cx="10" cy="10" r="4.300" fill="#fff" /><circle cx="10" cy="10" r="3.300" fill="#3f83ee" /></>, "on"],
  ["Snipping Tool", <><path d="M1.500 1.500h13v12h-13z" fill="#f5f5f5" /><path d="M4 4h8v7H4z" stroke="#d23e31" strokeDasharray="2 1" strokeWidth="1.500" /><path d="m9 11 8 3M15.500 8l-3 8" stroke="#1589db" strokeWidth="1.300" /><circle cx="12" cy="16.500" r="1.700" stroke="#299ee9" strokeWidth="1.300" /><circle cx="17.500" cy="13.500" r="1.600" stroke="#299ee9" strokeWidth="1.300" /></>],
  ["Notepad", <><path d="M4 3h12v15H4z" fill="#2e9fdd" /><path d="M4 2h12v4H4z" fill="#8bd5f5" /><path d="M6 1v3M8.700 1v3M11.300 1v3M14 1v3" stroke="#d5eef9" /><path d="M6 9h8M6 12h8M6 15h5" stroke="#126da6" /></>],
  ["Design app", <><circle cx="10" cy="10" r="8.500" fill="#fff" /><path d="M4.500 11.500C3.500 6 9 2.500 13.500 5z" fill="#2a2a2a" /><path d="M6.500 14 15 7.500c1.500 4-1 8-5.500 8.500-1.500 0-2.500-1-3-2z" fill="#2a2a2a" /><path d="m5 12 8.700-7 1.500 2.500L6.500 14.500z" fill="#f07a3d" /></>],
  ["Photos", <><rect x="2.500" y="2.500" width="15" height="15" rx="1.500" fill="#1674d1" /><path d="m2.500 14 6.500-7 8.500 8.500-1 2h-13l-1-1z" fill="#5dc5f5" /><path d="m3 17 6-5.500 6 6H4z" fill="#2a64c6" /><path d="M10 2.500h6a1.500 1.500 0 0 1 1.500 1.500v8z" fill="#173e9f" /><circle cx="14" cy="6" r="1.300" fill="#fff" /></>, "on"],
];

const Taskbar = () => (
  <footer className="grid h-8 grid-cols-[1fr_auto_1fr] items-center bg-linear-to-r from-[#1f2a36] from-15% via-[#13224c] via-33% to-[#1f2a36] to-70% font-['Open_Sans',sans-serif] text-white">
    <div />
    <div className="flex items-center pl-0.5">
      <button aria-label="Start" className="flex w-[22px] justify-center">
        <Svg s="size-4" v="0 0 16 16"><path d="M0 0h7.600v7.600H0z" fill="#77dcfb" /><path d="M8.400 0H16v7.600H8.400zM0 8.400h7.600V16H0z" fill="#48c3f4" /><path d="M8.400 8.400H16V16H8.400z" fill="#21a4ef" /></Svg>
      </button>
      <div className="ml-[5px] flex h-[22px] w-[147px] items-center rounded-full bg-[#35415f] pr-0.5 pl-2">
        <Svg s="size-2.5" v="0 0 10 10"><circle cx="4.200" cy="4.200" r="3.400" stroke="#e3e7ef" strokeWidth="1.200" /><path d="m6.700 6.700 3 3" stroke="#e3e7ef" strokeWidth="1.300" /></Svg>
        <input aria-label="Søg" placeholder="Søg" className="ml-[7px] w-0 min-w-0 flex-1 bg-transparent text-[8px] text-white outline-none placeholder:text-[#e0e4ec]" />
        <Svg s="h-5 w-[34px]" v="0 0 34 20">
          <path d="M19 1h12c3 5 3 10 0 14H19z" fill="#1d5c42" />
          <path d="M20 0v13M24 2v12M28 1v13M32 3v9" stroke="#2f9a45" strokeWidth="2" />
          <path d="M22 1v10M26 3v10" stroke="#6fa437" />
          <path d="M7 19h15l-5-3-4-9-2 1 1 8z" fill="#70462d" />
          <path d="M0 8c2-2 3-4 6-4 2-4 7-4 9-1 3 0 4 3 3 5 2 1 1 4-2 3-2 2-4 0-6-1-2 2-5 2-7 0-2 1-4 0-3-2z" fill="#f0692d" />
          <path d="M5 6c3-2 7-2 10 0M3 8c4-1 9-1 13 1" stroke="#ffa04a" strokeWidth=".8" />
          <path d="M12 19c3-6 9-7 13-6 4-1 6 0 7 2l-5 4z" fill="#8a705e" />
          <path d="M20 14c3 1 5-1 9 1M18 17c4-1 8 1 10-1" stroke="#c3aa90" strokeWidth=".9" />
        </Svg>
      </div>
      <div className="ml-[3px] flex">
        {apps.map(([n, d, on]) => (
          <button key={n} aria-label={n} className="flex h-7 w-[29px] flex-col items-center justify-between">
            <span className="h-0.5" />
            <Svg s="size-[19px]" v="0 0 20 20">{d}</Svg>
            <span className={on ? "h-0.5 w-1 rounded-full bg-[#a4a9b5]" : "h-0.5 w-1"} />
          </button>
        ))}
        <button aria-label="Autodesk Fusion" className="flex h-7 w-[29px] flex-col items-center justify-between rounded-sm bg-[#243050]">
          <span className="h-0.5" />
          <FusionLogo s="h-[17px] w-4" />
          <span className="h-0.5 w-2.5 rounded-full bg-[#54bfee]" />
        </button>
      </div>
    </div>
    <div className="flex items-center justify-end pr-[13px]">
      <button aria-label="Show hidden icons"><Svg s="h-[5px] w-2" v="0 0 8 5"><path d="m.7 4.300 3.300-3.300 3.300 3.300" stroke="#fff" strokeWidth="1.200" /></Svg></button>
      <span className="ml-3 text-[8px]">DAN</span>
      <Svg s="ml-3 h-[9px] w-[11px]" v="0 0 11 9"><path d="M.5 3.300c3-3 7-3 10 0M2.200 5c2-2 4.600-2 6.600 0M3.800 6.700c1-1 2.400-1 3.400 0" stroke="#fff" strokeWidth="1.100" /><circle cx="5.500" cy="8" r="1" fill="#fff" /></Svg>
      <Svg s="ml-[5px] h-[9px] w-[11px]" v="0 0 11 9"><path d="M.5 3h2L5 .8v7.400L2.500 6h-2zM6.700 3c.8 1 .8 2 0 3M8.300 1.700c1.700 2 1.700 4 0 5.600" stroke="#fff" strokeWidth=".9" /></Svg>
      <Svg s="ml-[5px] h-[9px] w-[11px]" v="0 0 11 9"><rect x="1" y="2.500" width="8.500" height="6" rx="1" fill="#fff" /><path d="M10 4.500h1v2h-1z" fill="#fff" /><path d="M1 0v2M3 0v2M.3 2h3.500v1.500L2 5 .3 3.500z" fill="#fff" stroke="#fff" strokeWidth=".8" /></Svg>
      <time dateTime="2025-11-02T12:59" className="ml-2.5 text-right text-[8px] leading-[11px]">12:59<br />02-11-2025</time>
    </div>
  </footer>
);

export default function App() {
  return (
    <div className="flex min-h-screen flex-col overflow-x-hidden bg-white font-['Liberation_Sans',Arial,sans-serif]">
      <TitleBar />
      <TabBar />
      <Ribbon />
      <main className="flex flex-1 flex-col justify-between">
        <div className="grid grid-cols-[202px_1fr_202px] items-start">
          <Browser />
          <Model />
          <ViewCube />
        </div>
        <div className="grid grid-cols-[202px_1fr_202px] items-center pb-1">
          <div className="pl-0.5"><PanelBar title="COMMENTS" /></div>
          <div className="flex justify-center"><NavBar /></div>
        </div>
      </main>
      <Timeline />
      <Taskbar />
    </div>
  );
}
